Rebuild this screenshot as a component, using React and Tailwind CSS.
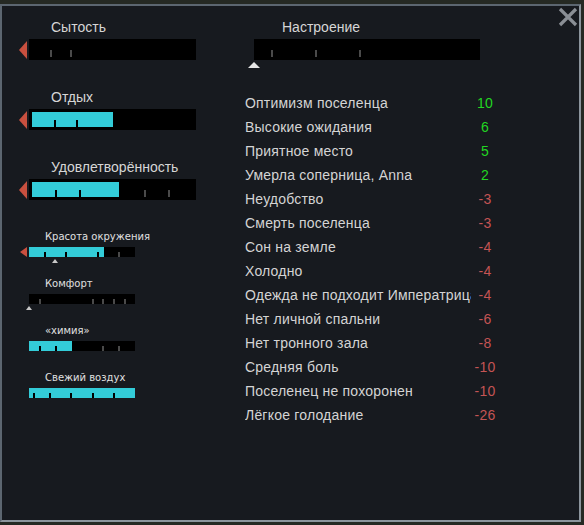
const bigNeeds = [
  { label: 'Сытость', fill: 0, ticks: [{ x: 21, c: 'g' }, { x: 41, c: 'g' }], arrow: true },
  { label: 'Отдых', fill: 81, ticks: [{ x: 25, c: 'b' }, { x: 47, c: 'b' }], arrow: true },
  {
    label: 'Удовлетворённость',
    fill: 87,
    ticks: [{ x: 26, c: 'b' }, { x: 50, c: 'b' }, { x: 115, c: 'g' }, { x: 139, c: 'g' }],
    arrow: true,
  },
];

const smallNeeds = [
  {
    label: 'Красота окружения',
    fill: 75,
    ticks: [{ x: 15, c: 'b' }, { x: 36, c: 'b' }, { x: 68, c: 'b' }, { x: 89, c: 'g' }],
    arrow: true,
    marker: 26,
  },
  {
    label: 'Комфорт',
    fill: 0,
    ticks: [{ x: 10, c: 'g' }, { x: 63, c: 'g' }, { x: 73, c: 'g' }, { x: 84, c: 'g' }, { x: 95, c: 'g' }],
    marker: 0,
  },
  {
    label: '«химия»',
    fill: 43,
    ticks: [{ x: 10, c: 'b' }, { x: 26, c: 'b' }, { x: 73, c: 'g' }, { x: 89, c: 'g' }],
  },
  {
    label: 'Свежий воздух',
    fill: 106,
    ticks: [{ x: 4, c: 'b' }, { x: 20, c: 'b' }, { x: 41, c: 'b' }, { x: 63, c: 'b' }, { x: 84, c: 'b' }],
  },
];

const thoughts = [
  ['Оптимизм поселенца', 10],
  ['Высокие ожидания', 6],
  ['Приятное место', 5],
  ['Умерла соперница, Anna', 2],
  ['Неудобство', -3],
  ['Смерть поселенца', -3],
  ['Сон на земле', -4],
  ['Холодно', -4],
  ['Одежда не подходит Императрица', -4],
  ['Нет личной спальни', -6],
  ['Нет тронного зала', -8],
  ['Средняя боль', -10],
  ['Поселенец не похоронен', -10],
  ['Лёгкое голодание', -26],
];

const sans = "font-['Liberation_Sans',Arial,sans-serif]";
const pixel = "font-['DejaVu_Sans',sans-serif]";

function RedArrow({ small }) {
  return small ? (
    <div className="w-0 h-0 border-y-[5px] border-y-transparent border-r-[7px] border-r-[#c9503f] ml-[1px]" />
  ) : (
    <div className="w-0 h-0 border-y-[9px] border-y-transparent border-r-[8px] border-r-[#c9503f]" />
  );
}

function WhiteMarker({ left, small }) {
  return (
    <div
      className={`absolute ${small ? 'top-[12px]' : 'top-[23px]'}`}
      style={{ left: left - (small ? 3 : 6) }}
    >
      {small ? (
        <div className="w-0 h-0 border-x-[3px] border-x-transparent border-b-[4px] border-b-[#c8c8c8]" />
      ) : (
        <div className="w-0 h-0 border-x-[6px] border-x-transparent border-b-[6px] border-b-[#e6e6e6]" />
      )}
    </div>
  );
}

function BigBar({ need }) {
  return (
    <div className="flex flex-col">
      <div className={`pl-[32px] h-[16px] text-[14px] leading-[16px] text-[#d6d6d6] ${sans}`}>{need.label}</div>
      <div className="mt-[4px] flex items-center">
        <div className="w-[10px] flex">{need.arrow && <RedArrow />}</div>
        <div className="relative w-[167px] h-[21px] bg-black">
          {need.fill > 0 && (
            <div className="absolute left-[3px] top-[3px] h-[15px] bg-[#33ccd8]" style={{ width: need.fill }} />
          )}
          {need.ticks.map((t, i) => (
            <div
              key={i}
              className={`absolute top-[11px] w-[2px] h-[7px] ${t.c === 'b' ? 'bg-black' : 'bg-[#4a4a4a]'}`}
              style={{ left: t.x }}
            />
          ))}
        </div>
      </div>
    </div>
  );
}

function SmallBar({ need }) {
  return (
    <div className="flex flex-col h-[47px]">
      <div className={`pl-[26px] h-[14px] text-[10px] leading-[14px] text-[#e0e0e0] ${pixel}`}>{need.label}</div>
      <div className="mt-[3px] flex items-center">
        <div className="w-[10px] flex">{need.arrow && <RedArrow small />}</div>
        <div className="relative w-[106px] h-[10px] bg-black">
          {need.fill > 0 && <div className="absolute left-0 top-0 h-[10px] bg-[#33ccd8]" style={{ width: need.fill }} />}
          {need.ticks.map((t, i) => (
            <div
              key={i}
              className={`absolute top-[5px] w-[2px] h-[5px] ${t.c === 'b' ? 'bg-black' : 'bg-[#4a4a4a]'}`}
              style={{ left: t.x }}
            />
          ))}
          {need.marker !== undefined && <WhiteMarker left={need.marker} small />}
        </div>
      </div>
    </div>
  );
}

function CloseIcon() {
  return (
    <svg width="20" height="20" viewBox="0 0 20 20" className="text-[#8a8f95]">
      <path d="M2 2L18 18M18 2L2 18" stroke="currentColor" strokeWidth="3.2" />
    </svg>
  );
}

export default function App() {
  return (
    <div className="w-[584px] h-[525px] bg-[#252923] pt-[4px] overflow-hidden">
      <div className="relative w-[581px] h-[518px] bg-[#171a1f] border-2 border-[#5c6670] border-r-[#8c959d] border-b-[#8c959d] flex">
        {/* close */}
        <div className="absolute top-[1px] right-[1px]">
          <CloseIcon />
        </div>

        {/* Left: needs */}
        <div className="pl-[17px] pt-[13px] w-[226px] flex flex-col">
          <div className="flex flex-col gap-[29px]">
            {bigNeeds.map((n) => (
              <BigBar key={n.label} need={n} />
            ))}
          </div>
          <div className="mt-[30px] flex flex-col">
            {smallNeeds.map((n) => (
              <SmallBar key={n.label} need={n} />
            ))}
          </div>
        </div>

        {/* Right: mood */}
        <div className="pl-[17px] pt-[13px] flex flex-col">
          <div className={`pl-[37px] h-[16px] text-[14px] leading-[16px] text-[#d6d6d6] ${sans}`}>Настроение</div>
          <div className="mt-[4px] ml-[9px] relative w-[226px] h-[21px] bg-black">
            {[17, 61, 105].map((x) => (
              <div key={x} className="absolute top-[11px] w-[2px] h-[7px] bg-[#4a4a4a]" style={{ left: x }} />
            ))}
            <WhiteMarker left={0} />
          </div>
          <div className="mt-[31px] flex flex-col">
            {thoughts.map(([label, val]) => (
              <div key={label} className={`flex items-center h-[24px] text-[14px] tracking-[0.2px] ${sans}`}>
                <div className="w-[226px] overflow-hidden whitespace-nowrap text-[#d4d4d4]">{label}</div>
                <div className={`w-[28px] text-center ${val > 0 ? 'text-[#22d622]' : 'text-[#c45454]'}`}>{val}</div>
              </div>
            ))}
          </div>
        </div>
      </div>
    </div>
  );
}
